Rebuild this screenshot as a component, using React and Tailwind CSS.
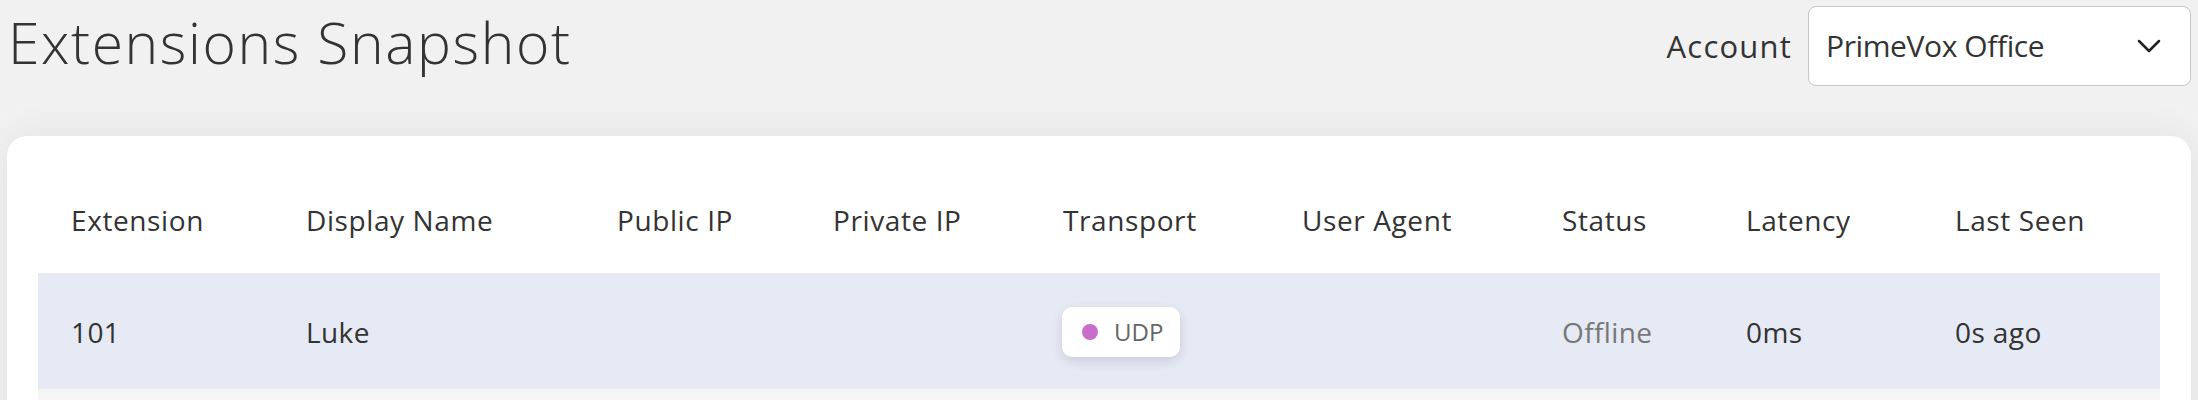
import { ChevronDown } from 'lucide-react';

const columns = [
  'Extension',
  'Display Name',
  'Public IP',
  'Private IP',
  'Transport',
  'User Agent',
  'Status',
  'Latency',
  'Last Seen',
];

const rows = [
  {
    extension: '101',
    name: 'Luke',
    publicIp: '',
    privateIp: '',
    transport: 'UDP',
    userAgent: '',
    status: 'Offline',
    latency: '0ms',
    lastSeen: '0s ago',
  },
];

const gridCols =
  'grid grid-cols-[235px_311px_216px_230px_239px_260px_184px_209px_236px]';

const TransportBadge = ({ label }) => (
  <span className="inline-flex items-center h-[50px] w-[118px] pl-[20px] gap-[16px] rounded-[10px] bg-white shadow-[0_4px_12px_rgba(0,0,0,0.13)]">
    <span className="w-[16px] h-[16px] rounded-full bg-[#c86dc9]" />
    <span className="text-[24px] text-[#666] leading-none">{label}</span>
  </span>
);

const App = () => {
  return (
    <div className="min-h-screen bg-[#f1f1f1] px-[7px] text-[#333] font-['Open_Sans','Noto_Sans',sans-serif]">
      {/* Header */}
      <div className="flex items-start justify-between h-[136px]">
        <h1 className="mt-[14px] ml-[1px] text-[57px] font-light leading-none tracking-[1.6px]">
          Extensions Snapshot
        </h1>

        <div className="flex items-center gap-[16px] mt-[6px]">
          <span className="text-[31px] font-medium leading-none tracking-[1.2px]">Account</span>
          <div className="flex items-center justify-between w-[383px] h-[80px] pl-[17px] pr-[21px] bg-white border-[1.5px] border-[#c6c6c6] rounded-[8px]">
            <span className="text-[30px] leading-none tracking-[-0.4px]">PrimeVox Office</span>
            <ChevronDown size={40} strokeWidth={1.5} className="text-[#222]" />
          </div>
        </div>
      </div>

      {/* Card */}
      <div className="bg-white rounded-[20px] shadow-[0_0_40px_rgba(0,0,0,0.07)] px-[31px] pt-[31px] pb-[40px]">
        <div className={`${gridCols} h-[107px] items-center border-b border-[#ebebeb]`}>
          {columns.map((col) => (
            <div key={col} className="pl-[33px] text-[28px] font-medium leading-none whitespace-nowrap tracking-[0.6px]">
              {col}
            </div>
          ))}
        </div>

        {rows.map((row) => (
          <div key={row.extension} className={`${gridCols} h-[115px] items-center bg-[#e6eaf5] text-[28px] leading-none tracking-[0.4px]`}>
            <div className="pl-[33px]">{row.extension}</div>
            <div className="pl-[33px]">{row.name}</div>
            <div className="pl-[33px]">{row.publicIp}</div>
            <div className="pl-[33px]">{row.privateIp}</div>
            <div className="pl-[32px] tracking-normal">
              <TransportBadge label={row.transport} />
            </div>
            <div className="pl-[33px]">{row.userAgent}</div>
            <div className="pl-[33px] text-[#777]">{row.status}</div>
            <div className="pl-[33px]">{row.latency}</div>
            <div className="pl-[33px]">{row.lastSeen}</div>
          </div>
        ))}

        <div className={`${gridCols} h-[115px] bg-[#f5f5f5]`} />
      </div>
    </div>
  );
};

export default App;
